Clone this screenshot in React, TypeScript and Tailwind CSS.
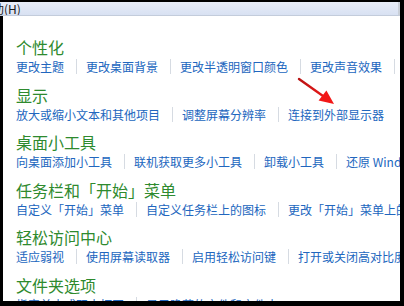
import React from 'react';

const FONT = '"Microsoft YaHei", "Noto Sans CJK SC", "Noto Sans", sans-serif';

type Section = { title: string; links: string[] };

const SECTIONS: Section[] = [
  { title: '个性化', links: ['更改主题', '更改桌面背景', '更改半透明窗口颜色', '更改声音效果', ''] },
  { title: '显示', links: ['放大或缩小文本和其他项目', '调整屏幕分辨率', '连接到外部显示器'] },
  { title: '桌面小工具', links: ['向桌面添加小工具', '联机获取更多小工具', '卸载小工具', '还原 Windows 桌面小工具'] },
  { title: '任务栏和「开始」菜单', links: ['自定义「开始」菜单', '自定义任务栏上的图标', '更改「开始」菜单上的图片'] },
  { title: '轻松访问中心', links: ['适应弱视', '使用屏幕读取器', '启用轻松访问键', '打开或关闭高对比度'] },
  { title: '文件夹选项', links: ['指定单击或双击打开', '显示隐藏的文件和文件夹'] },
];

const LinkRow: React.FC<{ links: string[] }> = ({ links }) => (
  <div className="flex items-center h-[19px] whitespace-nowrap text-[12px] leading-[19px] text-[#2166be]">
    {links.map((l, i) => (
      <React.Fragment key={i}>
        {i > 0 && <span className="ml-3 mr-[9px] w-px h-[15px] bg-[#d6dbe2] shrink-0" />}
        {l && <span className="shrink-0">{l}</span>}
      </React.Fragment>
    ))}
  </div>
);

const App: React.FC = () => {
  return (
    <div className="relative w-[404px] h-[306px] bg-black pt-[2px] pb-[5px] pr-[4px] flex flex-col overflow-hidden" style={{ fontFamily: FONT }}>
      {/* menu bar */}
      <div className="h-[14px] shrink-0 flex items-center overflow-hidden bg-gradient-to-b from-[#e8edf8] to-[#d8e1f2] border-b border-[#c3ccdb] border-r-2 border-r-[#c9cfd8]">
        <span className="ml-[-8px] text-[12px] leading-[12px] text-[#1a1a1a] whitespace-nowrap">助(H)</span>
      </div>

      {/* content */}
      <div className="flex-1 ml-[3px] bg-white overflow-hidden pl-[13px] pt-[21px]">
        {SECTIONS.map((s) => (
          <div key={s.title} className="h-[47.5px]">
            <div className="h-[20px] text-[16px] leading-[20px] text-[#2e8a2e] whitespace-nowrap">{s.title}</div>
            <LinkRow links={s.links} />
          </div>
        ))}
      </div>

      {/* red arrow overlay */}
      <svg className="absolute left-0 top-0" width="404" height="306" viewBox="0 0 404 306">
        <defs>
          <linearGradient id="arw" x1="299" y1="79" x2="334" y2="104" gradientUnits="userSpaceOnUse">
            <stop offset="0" stopColor="#b81414" />
            <stop offset="1" stopColor="#ff1a1a" />
          </linearGradient>
        </defs>
        <line x1="299" y1="79" x2="323" y2="96" stroke="url(#arw)" strokeWidth="2.4" strokeLinecap="round" />
        <polygon points="334,104 318.6,100.6 326.4,90.4" fill="#f21818" />
      </svg>
    </div>
  );
};

export default App;
